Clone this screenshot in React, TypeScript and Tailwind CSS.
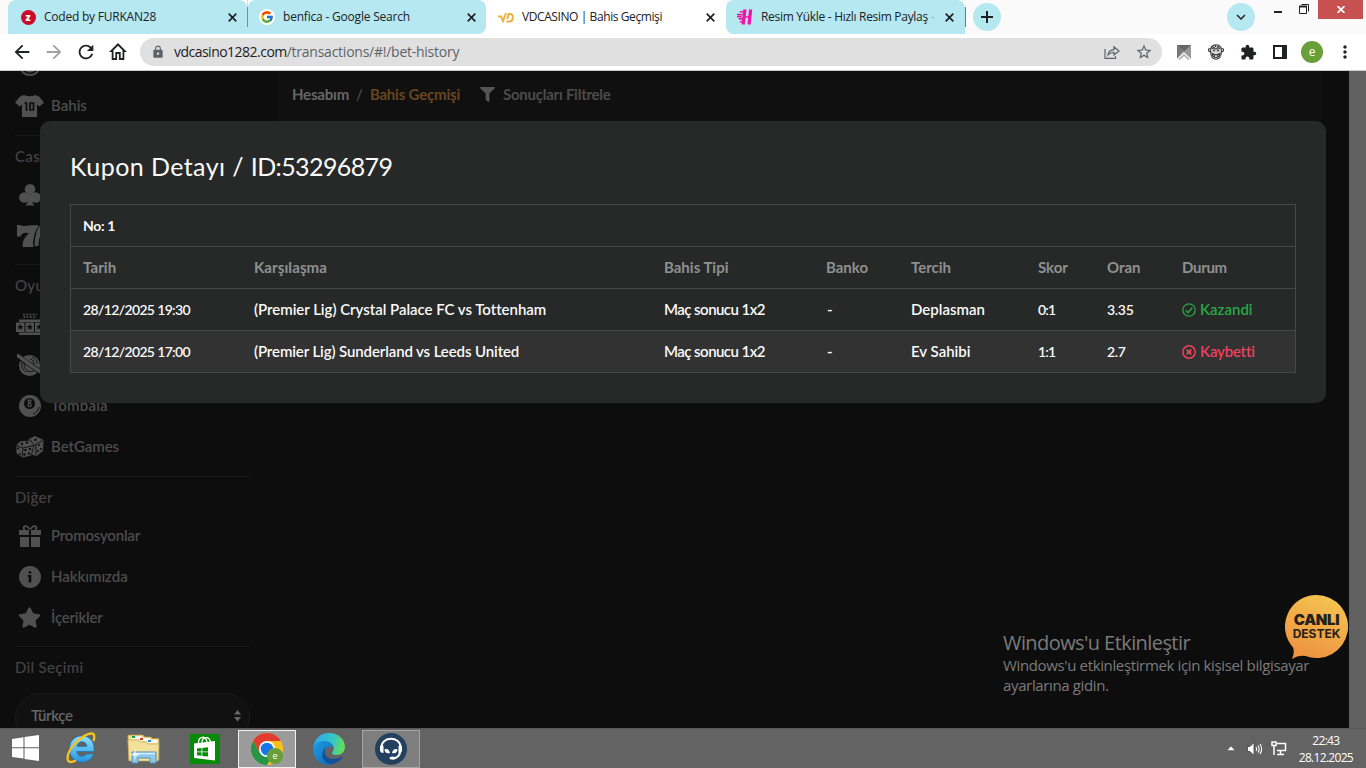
import type { ReactNode } from "react";
import { FcGoogle } from "react-icons/fc";
import { FaFilter, FaStar } from "react-icons/fa";
import {
  MdArrowBack,
  MdArrowForward,
  MdExpandMore,
  MdExtension,
  MdLock,
  MdMoreVert,
  MdOutlineHome,
  MdRefresh,
  MdStarBorder,
} from "react-icons/md";

/* ---------- browser chrome ---------- */

function Tab({ icon, title, className, close = "pr-[10px]" }: { icon: ReactNode; title: ReactNode; className: string; close?: string }) {
  return (
    <div className={`flex h-[34px] shrink-0 items-center text-[12px] text-[#202124] ${className} ${close}`}>
      <span className="flex w-4 shrink-0 justify-center">{icon}</span>
      <span className="min-w-0 flex-1 whitespace-nowrap pl-2 leading-4">{title}</span>
      <svg width="9" height="9" viewBox="0 0 9 9" className="shrink-0" stroke="#202124" strokeWidth="1.700">
        <path d="m.7.7 7.600 7.600m0-7.600L.7 8.300" />
      </svg>
    </div>
  );
}

function VdLogo() {
  return (
    <svg width="16" height="11" viewBox="0 0 16 11" fill="none" stroke="#f0b040" strokeWidth="2">
      <path d="M0 4.500h3l2 4.500 3-8M8.500 9.500h3c2 0 3-1.500 3.300-3.700.3-2.300-.8-3.800-2.800-3.800h-1.500L9.300 7" />
    </svg>
  );
}

function PinkLogo() {
  return (
    <svg width="17" height="16" viewBox="0 0 17 16" stroke="#f013a8" fill="none">
      <path d="M8.500 0 6.500 16M14.500 0 12.800 16" strokeWidth="3.400" />
      <path d="M3 2.500h5M0 5.500h6M7 8h7M2 10h5M0 7.700h5M3 13h4" strokeWidth="1.700" />
    </svg>
  );
}

function TabStrip() {
  return (
    <div className="flex h-[34px] bg-[#fafafa] pl-2">
      <Tab
        className="w-[239px] rounded-t-lg bg-[#b6e8f2] pl-3 tracking-[-0.22px]"
        icon={<span className="flex h-[15px] w-[15px] items-center justify-center rounded-full bg-[#cc0a2c] pb-px text-[10px] leading-none font-black text-white">z</span>}
        title="Coded by FURKAN28"
      />
      <div className="flex w-px items-center bg-[#b6e8f2]">
        <div className="h-5 w-px bg-[#74909a]" />
      </div>
      <Tab
        className="w-[238px] rounded-t-lg rounded-br-lg bg-[#b6e8f2] pl-[11px] tracking-[-0.2px]"
        icon={<span className="flex h-4 w-4 items-center justify-center rounded-full bg-white"><FcGoogle size={14} /></span>}
        title="benfica - Google Search"
      />
      <Tab className="w-[240px] rounded-t-lg bg-white pl-3 tracking-[-0.41px]" close="pr-[11px]" icon={<VdLogo />} title="VDCASINO | Bahis Geçmişi" />
      <Tab
        className="w-[239px] rounded-t-lg rounded-bl-lg bg-[#b6e8f2] pl-[11px] tracking-[-0.3px]"
        close="pr-[11px]"
        icon={<PinkLogo />}
        title={<>Resim Yükle - Hızlı Resim Paylaş <span className="text-[#8db5bd]">-</span></>}
      />
      <div className="flex items-center">
        <div className="h-5 w-px bg-[#777]" />
        <div className="ml-[7px] flex h-7 w-7 items-center justify-center rounded-full bg-[#b6e8f2]">
          <svg width="12" height="12" stroke="#202124" strokeWidth="2">
            <path d="M6 0v12M0 6h12" />
          </svg>
        </div>
      </div>
      <div className="ml-auto flex">
        <div className="mt-[3px] flex h-7 w-7 items-center justify-center rounded-full bg-[#b6e8f2]">
          <MdExpandMore size={18} className="text-[#202124]" />
        </div>
        <svg className="ml-[19px]" width="44" height="20" fill="none" stroke="#222">
          <path d="M0 12h8" strokeWidth="2" />
          <path d="M25.500 6.500h7v7h-7zM27.500 4.500h7v7" />
          <path d="M25 6.500h8" strokeWidth="2" />
        </svg>
        <div className="mr-[3px] flex h-[19px] w-[45px] items-center justify-center bg-[#c75050]">
          <svg width="8" height="7" viewBox="0 0 8 7" stroke="#fff" strokeWidth="1.700">
            <path d="m.5 0 7 7m0-7-7 7" />
          </svg>
        </div>
      </div>
    </div>
  );
}

function MonkeyIcon() {
  return (
    <svg width="16" height="16" viewBox="0 0 16 16" fill="#d8d8d8" stroke="#3f3f3f" strokeWidth="1.100">
      <circle cx="2.300" cy="6" r="1.800" />
      <circle cx="13.700" cy="6" r="1.800" />
      <path d="M8 .8c4 0 5.800 2.800 5.500 6.500C13.200 12 11 15.300 8 15.300S2.800 12 2.500 7.300C2.200 3.600 4 .8 8 .8z" />
      <path d="M4.500 2.500 6 4m1.500-3v2m3-1.500L9.500 4" fill="none" />
      <path d="M4 5c1-1.500 2.500-1.500 3.500 0h1c1-1.500 2.500-1.500 3.500 0M4 9.500c2.500 1.500 5.500 1.500 8 0-.4 3-2 4-4 4s-3.600-1-4-4zM6.300 10.500v2.500m3.400-2.500V13" fill="none" />
      <circle cx="6" cy="6.500" r=".5" />
      <circle cx="10" cy="6.500" r=".5" />
    </svg>
  );
}

function Toolbar() {
  return (
    <div className="flex h-[37px] items-center border-b border-[#c9ccca] bg-white text-[#202124]">
      <MdArrowBack size={22} className="ml-[11px]" />
      <MdArrowForward size={22} className="ml-[10px] text-[#a0a1a3]" />
      <MdRefresh size={22} className="ml-[10px]" />
      <MdOutlineHome size={24} className="ml-[9px] [transform:scaleX(.9)]" />
      <div className="ml-[10px] flex h-7 w-[1022px] items-center rounded-full bg-[#e0e0e0] pl-[11px] text-[#5f6368]">
        <MdLock size={14} />
        <div className="-mt-px ml-[9px] text-[14px] whitespace-nowrap">
          <span className="tracking-[-0.52px] text-[#202124]">vdcasino1282.com</span>
          <span className="tracking-[-0.25px]">/transactions/#!/bet-history</span>
        </div>
        <svg className="ml-auto" width="16" height="16" viewBox="0 0 16 16" fill="none" stroke="#5f6368" strokeWidth="1.200">
          <path d="M1 5v9.400h10.500V12M4 10.800c.6-3.500 2.400-5 6-5.200V2.800L15 7l-5 4V8.400c-2.800 0-4.500.7-6 2.400z" />
        </svg>
        <MdStarBorder size={18} className="mr-[9px] ml-[15px]" />
      </div>
      <svg className="ml-[15px]" width="14" height="15" viewBox="0 0 14 15">
        <path d="M0 0h14v14l-7-6-7 6z" fill="#999" />
        <path d="M0 0h14L7 6.500z" fill="#666" />
        <path d="m0 0 6 6-6 7z" fill="#777" />
        <path d="m1 14 6-6 6 6" fill="none" stroke="#fff" strokeWidth="1.200" />
        <path d="m2 14.500 5-4.500 5 4.500" fill="none" stroke="#aaa" strokeWidth="1.500" />
      </svg>
      <div className="ml-[17px]"><MonkeyIcon /></div>
      <MdExtension size={17} className="ml-4" />
      <svg className="ml-4" width="14" height="14">
        <path d="M1 1h12v12H1z" fill="none" stroke="#202124" strokeWidth="2" />
        <path d="M9 0h5v14H9z" fill="#202124" />
      </svg>
      <div className="ml-[14px] flex h-[22px] w-[22px] items-center justify-center rounded-full bg-[#689f38] text-[12px] leading-none text-white">
        <span className="-mt-px">e</span>
      </div>
      <MdMoreVert size={20} className="ml-[12px]" />
    </div>
  );
}

/* ---------- sidebar ---------- */

function JerseyIcon() {
  return (
    <svg width="29" height="22" viewBox="0 0 29 22">
      <path d="M9 0c3 1.600 8 1.600 11 0l4 1.500 5 6-4.500 4L22 9.500V22H7V9.500l-2.500 2L0 7.500l5-6z" fill="currentColor" />
      <path d="M9.500 8h2v8M15 8h3.500v7H15z" fill="none" stroke="#0d0d0d" strokeWidth="1.700" />
    </svg>
  );
}

function CoinIcon() {
  return (
    <svg width="22" height="22" viewBox="0 0 22 22" fill="none" stroke="currentColor">
      <circle cx="11" cy="11" r="10" strokeWidth="1.800" />
      <circle cx="11" cy="11" r="6" strokeWidth="3" />
    </svg>
  );
}

function ClubIcon() {
  return (
    <svg width="22" height="22" viewBox="0 0 22 22" fill="currentColor">
      <circle cx="11" cy="5.300" r="5.300" />
      <circle cx="5.300" cy="13.500" r="5.200" />
      <circle cx="16.700" cy="13.500" r="5.200" />
      <path d="M10 9h2l1 7c.3 3 1.300 4.500 3 5.500H6c1.700-1 2.700-2.500 3-5.500z" />
    </svg>
  );
}

function SevensIcon() {
  return (
    <svg width="26" height="22" viewBox="0 0 26 22" fill="currentColor">
      <path d="M0 0h2.500C7 1.500 9 1 12 .5L21 0v3c-4 6-5 11-4.500 19H5.500c0-6 2-10 6.500-13.500-3.500-1.500-7-1-8.500 3H0z" />
      <path d="M22 1h4v3c-3 6-4.500 11-4.500 17h-4c0-7 1-13 4.500-20z" />
      <path d="M21.500 2c-4 6-4.500 12-4.500 18" fill="none" stroke="#0d0d0d" strokeWidth=".8" />
    </svg>
  );
}

function SlotsIcon() {
  return (
    <svg width="28" height="22" viewBox="0 0 28 22" fill="currentColor">
      <path d="M7 1.500h14M7.500 4h13" stroke="currentColor" strokeWidth="1.300" strokeDasharray="2 1.200" />
      <path d="M3 6.500h22V9H3zM3 19.500h22V22H3zM0 9.500h8.500V19H0zM9.500 9.500H18V19H9.500zM19 9.500h8.500V19H19z" />
      <path d="m4.300 11 1 2h2l-1.500 1.500.5 2.300-2-1.200-2 1.200.5-2.300L1.300 13h2zm9.500 0 1 2h2l-1.500 1.500.5 2.300-2-1.200-2 1.200.5-2.300-1.500-1.500h2zm9.500 0 1 2h2l-1.500 1.500.5 2.300-2-1.200-2 1.200.5-2.300-1.500-1.500h2z" fill="#0d0d0d" />
    </svg>
  );
}

function PropellerIcon() {
  return (
    <svg width="26" height="22" viewBox="0 0 26 22" fill="none" stroke="currentColor">
      <circle cx="12.500" cy="11.500" r="10.500" fill="currentColor" stroke="none" />
      <path d="M5 8c-1 4 0 8 4 10M7 9c0 4 1 6 4 8M15 3c3 1 5 3 5 7M13 5c3 1 4 2 4 5M10 17c3 1 6 1 9-1" stroke="#0d0d0d" strokeWidth=".9" />
      <path d="M1 2.500 25 19" stroke="#0d0d0d" strokeWidth="5" />
      <path d="M.5 1.500 11.500 9.500M14 11.500 26 19.500" strokeWidth="3.600" strokeLinecap="round" />
      <circle cx="12.700" cy="10.500" r="2" fill="currentColor" stroke="none" />
    </svg>
  );
}

function EightBallIcon() {
  return (
    <svg width="22" height="22" viewBox="0 0 22 22">
      <circle cx="11" cy="11" r="11" fill="currentColor" />
      <circle cx="10.500" cy="8.500" r="5.500" fill="#0d0d0d" />
      <path d="M9 6.200a1.500 1.200 0 1 1 3 0c0 1.600-3 1.600-3 4a1.600 1.500 0 1 0 3.200 0c0-2.400-3.200-2.400-3.200-4z" fill="none" stroke="currentColor" strokeWidth="1.300" />
      <path d="M20 12c-1 4-3 6-6 7" fill="none" stroke="#0d0d0d" strokeWidth="1" />
    </svg>
  );
}

function DiceIcon() {
  return (
    <svg width="29" height="22" viewBox="0 0 29 22" fill="currentColor">
      <path d="m13 3.500 7-3.500 8.500 4L28 15l-6.500 5-7-2z" />
      <path d="M1 9 5.500 5l10-1L19 9.500 16 20l-9 2-6-5z" stroke="#0d0d0d" strokeWidth=".8" />
      <path d="m1 9.500 7 2.500 10.500-2.500M8 12l-1 9.500M19 10l2-2 7-3.500M21 8v11" fill="none" stroke="#0d0d0d" strokeWidth=".9" />
      <g fill="#0d0d0d">
        <circle cx="7" cy="8" r="1.200" /><circle cx="12" cy="6.500" r="1.200" /><circle cx="3" cy="12.500" r="1" />
        <circle cx="5" cy="18" r="1" /><circle cx="10.500" cy="14" r="1.200" /><circle cx="15" cy="13" r="1.200" />
        <circle cx="9.500" cy="18.500" r="1.200" /><circle cx="14" cy="17.500" r="1.200" /><circle cx="20.500" cy="3.800" r="1.300" />
        <circle cx="24" cy="9" r="1.100" /><circle cx="26" cy="13" r="1.100" /><circle cx="23" cy="15" r="1" />
      </g>
    </svg>
  );
}

function GiftIcon() {
  return (
    <svg width="22" height="22" viewBox="0 0 22 22" fill="currentColor">
      <path d="M0 5h10v5H0zM12 5h10v5H12zM1 12h9v10H1zM12 12h9v10h-9z" />
      <path d="M10.500 4.500C9 1 6 .3 4.800 2c-.6 1 0 2.200 1.200 2.700M11.500 4.500C13 1 16 .3 17.200 2c.6 1 0 2.200-1.200 2.700" fill="none" stroke="currentColor" strokeWidth="1.700" />
    </svg>
  );
}

function InfoIcon() {
  return (
    <svg width="22" height="22" viewBox="0 0 22 22">
      <circle cx="11" cy="11" r="11" fill="currentColor" />
      <path d="M9.700 5.200h2.600v2.400H9.700zM8.700 9h3.600v7.500H9.700v-5.600h-1z" fill="#0d0d0d" />
    </svg>
  );
}

function Item({ icon, label, className = "" }: { icon: ReactNode; label: string; className?: string }) {
  return (
    <div className="flex h-[41px] items-center">
      <span className="flex w-[29px] justify-center text-[#505050]">{icon}</span>
      <span className={`ml-[7px] text-[15px] font-semibold text-[#4c4c4c] ${className}`}>{label}</span>
    </div>
  );
}

function Section({ title, children, className = "" }: { title: string; children?: ReactNode; className?: string }) {
  return (
    <section className={className}>
      <div className="flex h-[39px] items-center border-t border-[#181818] pt-[3px] text-[15px] font-medium tracking-[0.33px] text-[#444]">{title}</div>
      {children}
    </section>
  );
}

function Sidebar() {
  return (
    <aside className="w-[277px] shrink-0 bg-[#0d0d0d] pl-[15px]">
      <div className="-mt-[27px] w-[235px]">
        <Item icon={<CoinIcon />} label="" />
        <Item icon={<JerseyIcon />} label="Bahis" />
        <Section title="Casino" className="mt-[9px]">
          <Item icon={<ClubIcon />} label="Casino" />
          <Item icon={<SevensIcon />} label="Slot" />
        </Section>
        <Section title="Oyunlar" className="mt-2">
          <Item icon={<SlotsIcon />} label="Slots" />
          <Item icon={<PropellerIcon />} label="Aviator" />
          <Item icon={<EightBallIcon />} label="Tombala" className="tracking-[0.2px]" />
          <Item icon={<DiceIcon />} label="BetGames" className="tracking-[-0.05px]" />
        </Section>
        <Section title="Diğer" className="mt-[9px]">
          <Item icon={<GiftIcon />} label="Promosyonlar" className="-mt-px tracking-[-0.22px]" />
          <Item icon={<InfoIcon />} label="Hakkımızda" className="-mt-px tracking-[-0.05px]" />
          <Item icon={<FaStar size={23} />} label="İçerikler" className="-mt-px tracking-[-0.2px]" />
        </Section>
        <Section title="Dil Seçimi" className="mt-2">
          <div className="mt-2 flex h-[50px] items-center rounded-full border border-[#1b1b1b] bg-[#111] pr-2 pb-[5px] pl-[15px] text-[15px] font-semibold text-[#666]">
            <span className="tracking-[-0.4px]">Türkçe</span>
            <svg className="ml-auto" width="7" height="12" fill="#666">
              <path d="M0 4.500h7L3.500 0zM0 7h7l-3.500 4.500z" />
            </svg>
          </div>
        </Section>
      </div>
    </aside>
  );
}

/* ---------- coupon dialog ---------- */

const cols = "grid h-[42px] grid-cols-[171px_410px_163px_84px_127px_69px_75px_1fr] items-center border-t border-[#474949] *:pl-3";

function WonMark() {
  return (
    <svg width="14" height="14" viewBox="0 0 14 14" fill="none" stroke="currentColor" strokeWidth="1.300">
      <circle cx="7" cy="7" r="6.200" />
      <path d="m3.800 7.300 2.200 2.400 4.200-5" strokeWidth="1.500" />
    </svg>
  );
}

function LostMark() {
  return (
    <svg width="14" height="14" viewBox="0 0 14 14" fill="none" stroke="currentColor" strokeWidth="1.500">
      <circle cx="7" cy="7" r="6.200" />
      <path d="m4.700 4.700 4.600 4.600m0-4.600L4.700 9.300" strokeWidth="1.800" />
    </svg>
  );
}

const bets = [
  { date: "28/12/2025 19:30", match: "(Premier Lig) Crystal Palace FC vs Tottenham", pick: "Deplasman", score: "0:1", odds: "3.35", won: true },
  { date: "28/12/2025 17:00", match: "(Premier Lig) Sunderland vs Leeds United", pick: "Ev Sahibi", score: "1:1", odds: "2.7", won: false },
];

function CouponDialog() {
  return (
    <div className="absolute top-[50px] left-10 h-[282px] w-[1286px] rounded-[10px] bg-[#272928] px-[30px] text-[15px] whitespace-nowrap text-[#fafafa]">
      <h2 className="pt-[29px] pb-[22px] text-[25px] leading-8">
        <span className="tracking-[0.42px]">Kupon Detayı / </span>
        <span className="tracking-[-0.6px]">ID:53296879</span>
      </h2>
      <div className="border-x border-b border-[#474949] font-semibold">
        <div className="flex h-[42px] items-center border-t border-[#474949] pl-3 text-[14px] font-bold tracking-[-0.35px]">No: 1</div>
        <div className={`${cols} font-bold text-[#8f9090]`}>
          <span className="tracking-[0.1px]">Tarih</span>
          <span className="tracking-[0.1px]">Karşılaşma</span>
          <span>Bahis Tipi</span>
          <span className="-ml-px">Banko</span>
          <span>Tercih</span>
          <span>Skor</span>
          <span>Oran</span>
          <span className="tracking-[-0.3px]">Durum</span>
        </div>
        {bets.map((b) => (
          <div key={b.date} className={`${cols} ${b.won ? "" : "bg-[#323232]"}`}>
            <span className="text-[14px] tracking-[-0.65px]">{b.date}</span>
            <span className={b.won ? "tracking-[-0.03px]" : "tracking-[-0.11px]"}>{b.match}</span>
            <span className="tracking-[-0.55px]">Maç sonucu 1x2</span>
            <span>-</span>
            <span>{b.pick}</span>
            <span className="text-[14px] tracking-[-0.8px]">{b.score}</span>
            <span className="text-[14px] tracking-[-0.3px]">{b.odds}</span>
            <span className={`flex items-center gap-1 ${b.won ? "text-[#28a745]" : "tracking-[-0.2px] text-[#f0415f]"}`}>
              {b.won ? <WonMark /> : <LostMark />}
              {b.won ? "Kazandi" : "Kaybetti"}
            </span>
          </div>
        ))}
      </div>
    </div>
  );
}

function LiveSupport() {
  return (
    <div className="absolute top-[524px] left-[1285px] h-16 w-[63px]">
      <svg className="absolute inset-0" width="63" height="64" viewBox="0 0 63 64">
        <defs>
          <linearGradient id="support" x1=".7" y1="0" x2=".3" y2="1">
            <stop offset="0" stopColor="#f4c44f" />
            <stop offset="1" stopColor="#ee9140" />
          </linearGradient>
        </defs>
        <path d="M31.500 0a31.500 31.500 0 1 1-11 61Q13 60 7 64q3-7 1-11.500A31.500 31.500 0 0 1 31.500 0z" fill="url(#support)" />
      </svg>
      <div className="relative flex flex-col items-center pt-[17px] font-[Inter] text-[#25211c]">
        <span className="text-[15px] leading-[16px] font-black tracking-[-0.3px]">CANLI</span>
        <span className="text-[12px] leading-[12px] font-bold">DESTEK</span>
      </div>
    </div>
  );
}

function Page() {
  return (
    <main className="relative flex h-[657px] overflow-hidden bg-[#0d0d0d] font-[Lato,sans-serif]">
      <Sidebar />
      <div className="w-[1044px]">
        <div className="flex h-[52px] items-center bg-[#101010] pb-1.5 pl-[15px] text-[15px] font-bold whitespace-nowrap">
          <span className="tracking-[-0.2px] text-[#666]">Hesabım</span>
          <span className="px-[7px] font-medium text-[#4d4d4d]">/</span>
          <span className="tracking-[-0.2px] text-[#69461f]">Bahis Geçmişi</span>
          <FaFilter size={15} className="ml-5 text-[#555]" />
          <span className="ml-2 tracking-[-0.25px] text-[#4b4b4b]">Sonuçları Filtrele</span>
        </div>
      </div>
      <div className="ml-auto w-[17px] bg-[#606060]" />
      <CouponDialog />
      <div className="absolute top-[558px] left-[1003px] font-['Open_Sans'] whitespace-nowrap text-[#7b7b7b]">
        <div className="pt-px text-[20px] leading-[25px] tracking-[-0.58px]">Windows'u Etkinleştir</div>
        <div className="text-[15px] leading-5 tracking-[-0.36px]">Windows'u etkinleştirmek için kişisel bilgisayar<br />ayarlarına gidin.</div>
      </div>
      <LiveSupport />
    </main>
  );
}

/* ---------- taskbar ---------- */

function StartIcon() {
  return (
    <svg width="27" height="26" viewBox="0 0 27 26" fill="#fff">
      <path d="M0 4 11.500 2.300V12.300H0zM12.500 2 27 0v12.300H12.500zM0 13.300h11.500v10.200L0 22zM12.500 13.300H27V26l-14.500-2z" />
    </svg>
  );
}

function ExplorerEIcon() {
  return (
    <svg width="30" height="32" viewBox="0 0 30 32" fill="none">
      <defs>
        <linearGradient id="ie" x1="0" y1="0" x2="0" y2="1"><stop offset="0" stopColor="#8fe0ff" /><stop offset="1" stopColor="#2496e0" /></linearGradient>
      </defs>
      <path d="M16 4C8.500 4 3.500 9.500 3.500 17S9 30 16 30c5.500 0 10-3 11.500-8h-7c-1 1.500-2.500 2.300-4.500 2.300-3 0-5-1.800-5.200-4.800H28C29 10 24 4 16 4zm-5 10.500c.5-3 2.300-4.800 5-4.800s4.700 1.800 5 4.800z" fill="url(#ie)" stroke="#1a78b8" strokeWidth=".7" />
      <path d="M27.500 9c1.500-4.500 1-7.500-2-7.500C18 1.500 1.500 16 1.500 26c0 5 4 4.500 8.500 2.500" stroke="#f4c020" strokeWidth="2.400" />
    </svg>
  );
}

function FolderIcon() {
  return (
    <svg width="33" height="30" viewBox="0 0 33 30">
      <path d="M1 4V2q0-1 1-1h14l1.500 2H24l1 1.500h6q1 0 1 1V26H2z" fill="#f3df97" stroke="#b99b45" strokeWidth=".8" />
      <path d="M5 2h9v3H5zM12 4h11v3H12zM20 6h10v3H20z" fill="#fff" />
      <path d="M5 2h3v2H5z" fill="#12a53c" /><path d="M13 4h3v2h-3z" fill="#d73b2b" /><path d="M21 6h3v2h-3z" fill="#2288e0" />
      <path d="M1 6h11l1 2h7l1 2h11l-1 17H2z" fill="#f3e09b" stroke="#c6a956" strokeWidth=".7" />
      <path d="M5 18h24v11h-6v-5H11v5H5z" fill="#8ec8ea" stroke="#5090bf" />
      <path d="M6 19.500h22" stroke="#d8f2ff" strokeWidth="1.500" />
      <path d="m8 14 .7 5 4.300 2-4.300.8L8 27l-.8-5.200L3 21l4.200-2z" fill="#fff" opacity=".8" />
    </svg>
  );
}

function StoreIcon() {
  return (
    <svg width="30" height="30" viewBox="0 0 30 30">
      <path d="M0 0h30v30H0z" fill="#058b05" />
      <path d="M4 9.500 25 7v19.500L4 24z" fill="#fff" />
      <path d="M8.500 9.500C8 2 16 1 17 8M12 8.500c0-6 7.500-7 8.500 0" fill="none" stroke="#fff" strokeWidth="1.300" />
      <path d="m7 14.500 4.500-.5v3.500H7zM12.300 13.900l5.700-.7v4.300h-5.700zM7 18.300h4.500v3.500L7 21.300zM12.300 18.300H18v4.300l-5.700-.7z" fill="#058b05" />
    </svg>
  );
}

function ChromeIcon() {
  return (
    <svg width="32" height="32" viewBox="0 0 32 32">
      <circle cx="16" cy="16" r="16" fill="#fbc116" />
      <path d="M2.140 8A16 16 0 0 1 29.860 8H16L9 20z" fill="#e33b2e" />
      <path d="M2.140 8A16 16 0 0 0 16 32l7-12-7 3-7-3z" fill="#269548" />
      <circle cx="16" cy="16" r="8" fill="#fff" />
      <circle cx="16" cy="16" r="6.300" fill="#1a73e8" />
    </svg>
  );
}

function EdgeIcon() {
  return (
    <svg width="32" height="32" viewBox="0 0 32 32">
      <defs>
        <linearGradient id="edgeTop" x1="0" y1=".3" x2="1" y2=".5"><stop offset="0" stopColor="#2aa7e8" /><stop offset=".6" stopColor="#39c6c6" /><stop offset="1" stopColor="#65de52" /></linearGradient>
        <linearGradient id="edgeLeft" x1="0" y1="0" x2="1" y2="1"><stop offset="0" stopColor="#1b9de2" /><stop offset="1" stopColor="#1268b8" /></linearGradient>
      </defs>
      <path d="M0 16C1 6 7 0 16 0c10 0 16 7 16 14 0 5-4 8-8 8-4 0-5.500-1.500-5-2.500 4-4 1-10-5-10C7 9.500 1 13 0 16z" fill="url(#edgeTop)" />
      <path d="M0 16c1-5 6-8.500 12-8 5 .5 8 3 8 6-9-2-12 6-8 11 2 3 5 5.500 9 5.500C9 35 0 26 0 16z" fill="url(#edgeLeft)" />
      <path d="M13 14c-3 5-1 12 7 12 4 0 7-1 10-3-2 4-6 7-11 8C10 31 6 21 13 14z" fill="#124f9d" />
    </svg>
  );
}

function HeadsetIcon() {
  return (
    <svg width="32" height="32" viewBox="0 0 32 32" fill="none">
      <circle cx="16" cy="16" r="16" fill="#23405f" />
      <path d="M6.500 14C7 3 25 3 25.500 14M25.500 18c-1 5-4 7.500-8 7.500" stroke="#fff" strokeWidth="2" />
      <path d="M5 13q2-1 3.500 0v7q-3.500 0-3.500-3zM27 13q-2-1-3.500 0v7q3.500 0 3.500-3zM9.500 16.500c3-1.500 5 1 5.500 3.500-3 1-5.500-.5-5.500-3.500zM22.500 16.500c-3-1.500-5 1-5.500 3.500 3 1 5.500-.5 5.500-3.500z" fill="#fff" />
      <ellipse cx="17.500" cy="25" rx="3" ry="1.600" fill="#fff" />
    </svg>
  );
}

function Taskbar() {
  return (
    <footer className="flex h-10 items-center border-t border-[#585858] bg-[#636363] pl-3">
      <div className="-mt-0.5 w-[27px]"><StartIcon /></div>
      <div className="-mt-0.5 ml-[27px]"><ExplorerEIcon /></div>
      <div className="ml-[31px]"><FolderIcon /></div>
      <div className="ml-[30px]"><StoreIcon /></div>
      <div className="relative ml-[18px] flex h-[38px] w-[58px] items-center justify-center border border-[#f2f2f2] bg-[#9b9b9b]">
        <ChromeIcon />
        <span className="absolute right-[12px] bottom-[3px] flex h-4 w-4 items-center justify-center rounded-full bg-[#689f38] text-[9px] leading-none text-white">e</span>
      </div>
      <div className="ml-[17px]"><EdgeIcon /></div>
      <div className="ml-[17px] flex h-[38px] w-[58px] items-center justify-center border border-[#a5a5a5] bg-[#7e7e7e]"><HeadsetIcon /></div>
      <div className="ml-auto flex items-center">
        <svg width="8" height="5"><path d="M0 4.500h8L4 0z" fill="#fff" stroke="#444" strokeWidth=".4" /></svg>
        <svg className="ml-3" width="16" height="14" viewBox="0 0 16 14">
          <path d="M.5 4.500h2.500L7 .5v13l-4-4H.5z" fill="#fff" stroke="#333" strokeWidth=".7" />
          <path d="M9 5q1.300 2 0 4M11 3.500q2.300 3.500 0 7M13 2q3.300 5 0 10" fill="none" stroke="#fff" strokeWidth="1.100" />
        </svg>
        <svg className="ml-[8px]" width="16" height="15" viewBox="0 0 16 15" fill="none" stroke="#fff">
          <path d="M6 2.500h8.500v7H6M9.500 10v3M6 13.500h7" strokeWidth="1.500" />
          <path d="M1 1h4v3.500H1zM3 5v9" strokeWidth="1.500" />
        </svg>
        <div className="mr-[13px] ml-[12px] text-center text-[12px] leading-[17px] tracking-[-0.7px] text-white">
          <div>22:43</div>
          <div>28.12.2025</div>
        </div>
      </div>
    </footer>
  );
}

export default function App() {
  return (
    <div className="flex h-[768px] w-[1366px] flex-col overflow-hidden font-['Open_Sans','Noto_Sans',sans-serif]">
      <TabStrip />
      <Toolbar />
      <Page />
      <Taskbar />
    </div>
  );
}
